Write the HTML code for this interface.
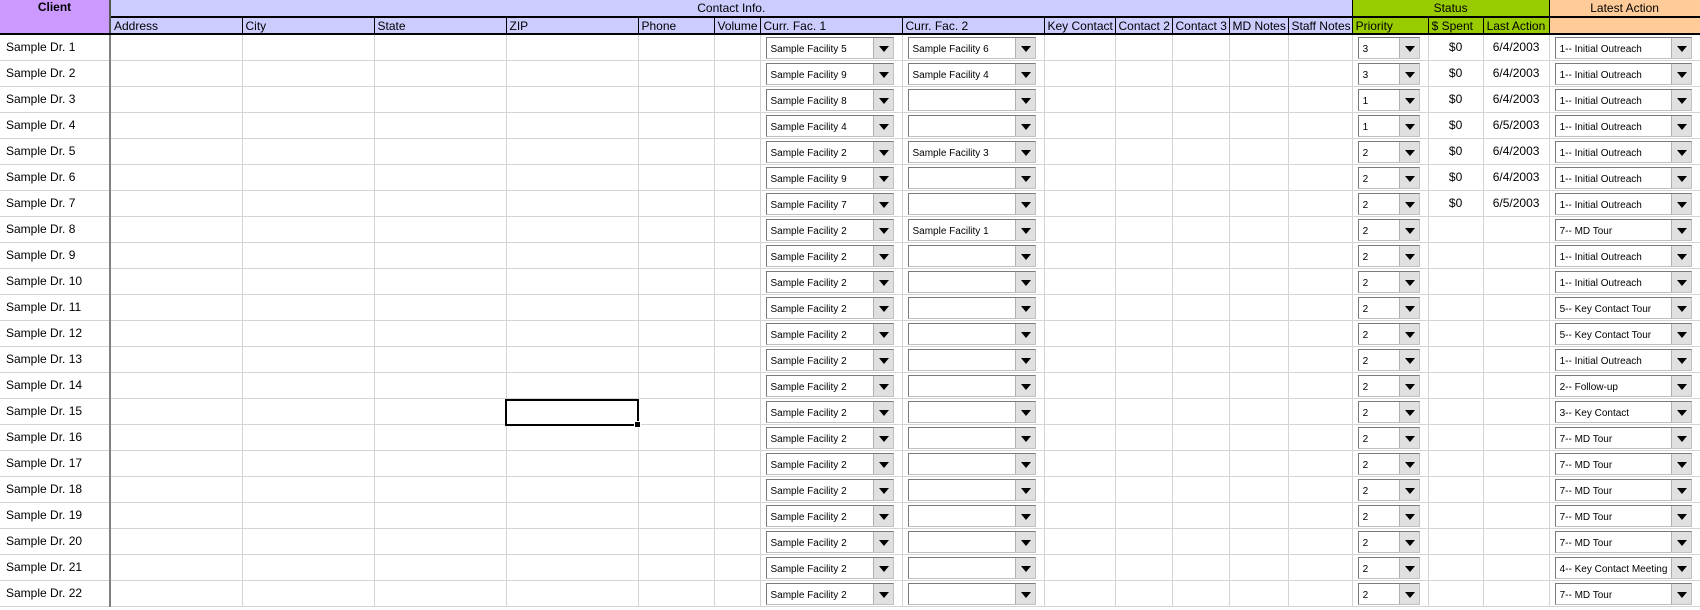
<!DOCTYPE html>
<html><head><meta charset="utf-8"><style>
*{margin:0;padding:0;box-sizing:border-box}
body{width:1700px;height:610px;overflow:hidden;background:#fff;font-family:"Liberation Sans",Arial,sans-serif;font-size:12px;color:#000;position:relative}
table{border-collapse:collapse;table-layout:fixed;position:absolute;left:0;top:0;width:1700px}
td{border-right:1px solid #d4d4d4;border-bottom:1px solid #d4d4d4;height:26px;padding:0;white-space:nowrap;overflow:hidden;position:relative;vertical-align:middle}
td.c{padding-left:6px;border-right:2px solid #808080}
tr.h1 td{height:17px;text-align:center;border-bottom:2px solid #000;border-right:1px solid #000}
tr.h2 td{height:17px;padding-left:3px;border-right:1px solid #000;border-bottom:2px solid #000}
.cl{background:#cc99ff;font-weight:bold;text-align:center;vertical-align:top !important;border-right:2px solid #555 !important;font-size:12px}
.ci{background:#ccccff}.st{background:#99cc00}.la{background:#ffcc99}
.dd{position:absolute;left:5px;right:8px;top:2px;height:22px;border:1px solid #7a7a7a;border-right-color:#c0c0c0;border-bottom-color:#c0c0c0;background:#fff;font-size:10px;padding:6px 0 0 4px}
.dd b{position:absolute;right:0;top:0;width:20px;height:20px;background:#e0e0e0;border-left:1px solid #b0b0b0}
.dd b:after{content:"";position:absolute;left:5px;top:8px;border-left:5px solid transparent;border-right:5px solid transparent;border-top:6px solid #000}
.r{text-align:center}
.sel{position:absolute;left:505px;top:399px;width:134px;height:27px;border:2px solid #000}
.sel:after{content:"";position:absolute;right:-4px;bottom:-4px;width:5px;height:5px;background:#000;border:1px solid #fff}
</style></head><body>
<table>
<colgroup><col style="width:110px"><col style="width:132px"><col style="width:132px"><col style="width:132px"><col style="width:132px"><col style="width:76px"><col style="width:46px"><col style="width:142px"><col style="width:142px"><col style="width:71px"><col style="width:57px"><col style="width:57px"><col style="width:59px"><col style="width:64px"><col style="width:76px"><col style="width:55px"><col style="width:66px"><col style="width:151px"></colgroup>
<tr class="h1"><td class="cl" rowspan="2">Client</td><td class="ci" colspan="13">Contact Info.</td><td class="st" colspan="3">Status</td><td class="la">Latest Action</td></tr>
<tr class="h2"><td class="ci">Address</td><td class="ci">City</td><td class="ci">State</td><td class="ci">ZIP</td><td class="ci">Phone</td><td class="ci">Volume</td><td class="ci">Curr. Fac. 1</td><td class="ci">Curr. Fac. 2</td><td class="ci">Key Contact</td><td class="ci">Contact 2</td><td class="ci">Contact 3</td><td class="ci">MD Notes</td><td class="ci">Staff Notes</td><td class="st">Priority</td><td class="st">$ Spent</td><td class="st">Last Action</td><td class="la"></td></tr>
<tr><td class="c">Sample Dr. 1</td><td></td><td></td><td></td><td></td><td></td><td></td><td><div class="dd">Sample Facility 5<b></b></div></td><td><div class="dd">Sample Facility 6<b></b></div></td><td></td><td></td><td></td><td></td><td></td><td><div class="dd">3<b></b></div></td><td class="r">$0</td><td class="r">6/4/2003</td><td><div class="dd">1-- Initial Outreach<b></b></div></td></tr>
<tr><td class="c">Sample Dr. 2</td><td></td><td></td><td></td><td></td><td></td><td></td><td><div class="dd">Sample Facility 9<b></b></div></td><td><div class="dd">Sample Facility 4<b></b></div></td><td></td><td></td><td></td><td></td><td></td><td><div class="dd">3<b></b></div></td><td class="r">$0</td><td class="r">6/4/2003</td><td><div class="dd">1-- Initial Outreach<b></b></div></td></tr>
<tr><td class="c">Sample Dr. 3</td><td></td><td></td><td></td><td></td><td></td><td></td><td><div class="dd">Sample Facility 8<b></b></div></td><td><div class="dd"><b></b></div></td><td></td><td></td><td></td><td></td><td></td><td><div class="dd">1<b></b></div></td><td class="r">$0</td><td class="r">6/4/2003</td><td><div class="dd">1-- Initial Outreach<b></b></div></td></tr>
<tr><td class="c">Sample Dr. 4</td><td></td><td></td><td></td><td></td><td></td><td></td><td><div class="dd">Sample Facility 4<b></b></div></td><td><div class="dd"><b></b></div></td><td></td><td></td><td></td><td></td><td></td><td><div class="dd">1<b></b></div></td><td class="r">$0</td><td class="r">6/5/2003</td><td><div class="dd">1-- Initial Outreach<b></b></div></td></tr>
<tr><td class="c">Sample Dr. 5</td><td></td><td></td><td></td><td></td><td></td><td></td><td><div class="dd">Sample Facility 2<b></b></div></td><td><div class="dd">Sample Facility 3<b></b></div></td><td></td><td></td><td></td><td></td><td></td><td><div class="dd">2<b></b></div></td><td class="r">$0</td><td class="r">6/4/2003</td><td><div class="dd">1-- Initial Outreach<b></b></div></td></tr>
<tr><td class="c">Sample Dr. 6</td><td></td><td></td><td></td><td></td><td></td><td></td><td><div class="dd">Sample Facility 9<b></b></div></td><td><div class="dd"><b></b></div></td><td></td><td></td><td></td><td></td><td></td><td><div class="dd">2<b></b></div></td><td class="r">$0</td><td class="r">6/4/2003</td><td><div class="dd">1-- Initial Outreach<b></b></div></td></tr>
<tr><td class="c">Sample Dr. 7</td><td></td><td></td><td></td><td></td><td></td><td></td><td><div class="dd">Sample Facility 7<b></b></div></td><td><div class="dd"><b></b></div></td><td></td><td></td><td></td><td></td><td></td><td><div class="dd">2<b></b></div></td><td class="r">$0</td><td class="r">6/5/2003</td><td><div class="dd">1-- Initial Outreach<b></b></div></td></tr>
<tr><td class="c">Sample Dr. 8</td><td></td><td></td><td></td><td></td><td></td><td></td><td><div class="dd">Sample Facility 2<b></b></div></td><td><div class="dd">Sample Facility 1<b></b></div></td><td></td><td></td><td></td><td></td><td></td><td><div class="dd">2<b></b></div></td><td></td><td></td><td><div class="dd">7-- MD Tour<b></b></div></td></tr>
<tr><td class="c">Sample Dr. 9</td><td></td><td></td><td></td><td></td><td></td><td></td><td><div class="dd">Sample Facility 2<b></b></div></td><td><div class="dd"><b></b></div></td><td></td><td></td><td></td><td></td><td></td><td><div class="dd">2<b></b></div></td><td></td><td></td><td><div class="dd">1-- Initial Outreach<b></b></div></td></tr>
<tr><td class="c">Sample Dr. 10</td><td></td><td></td><td></td><td></td><td></td><td></td><td><div class="dd">Sample Facility 2<b></b></div></td><td><div class="dd"><b></b></div></td><td></td><td></td><td></td><td></td><td></td><td><div class="dd">2<b></b></div></td><td></td><td></td><td><div class="dd">1-- Initial Outreach<b></b></div></td></tr>
<tr><td class="c">Sample Dr. 11</td><td></td><td></td><td></td><td></td><td></td><td></td><td><div class="dd">Sample Facility 2<b></b></div></td><td><div class="dd"><b></b></div></td><td></td><td></td><td></td><td></td><td></td><td><div class="dd">2<b></b></div></td><td></td><td></td><td><div class="dd">5-- Key Contact Tour<b></b></div></td></tr>
<tr><td class="c">Sample Dr. 12</td><td></td><td></td><td></td><td></td><td></td><td></td><td><div class="dd">Sample Facility 2<b></b></div></td><td><div class="dd"><b></b></div></td><td></td><td></td><td></td><td></td><td></td><td><div class="dd">2<b></b></div></td><td></td><td></td><td><div class="dd">5-- Key Contact Tour<b></b></div></td></tr>
<tr><td class="c">Sample Dr. 13</td><td></td><td></td><td></td><td></td><td></td><td></td><td><div class="dd">Sample Facility 2<b></b></div></td><td><div class="dd"><b></b></div></td><td></td><td></td><td></td><td></td><td></td><td><div class="dd">2<b></b></div></td><td></td><td></td><td><div class="dd">1-- Initial Outreach<b></b></div></td></tr>
<tr><td class="c">Sample Dr. 14</td><td></td><td></td><td></td><td></td><td></td><td></td><td><div class="dd">Sample Facility 2<b></b></div></td><td><div class="dd"><b></b></div></td><td></td><td></td><td></td><td></td><td></td><td><div class="dd">2<b></b></div></td><td></td><td></td><td><div class="dd">2-- Follow-up<b></b></div></td></tr>
<tr><td class="c">Sample Dr. 15</td><td></td><td></td><td></td><td></td><td></td><td></td><td><div class="dd">Sample Facility 2<b></b></div></td><td><div class="dd"><b></b></div></td><td></td><td></td><td></td><td></td><td></td><td><div class="dd">2<b></b></div></td><td></td><td></td><td><div class="dd">3-- Key Contact<b></b></div></td></tr>
<tr><td class="c">Sample Dr. 16</td><td></td><td></td><td></td><td></td><td></td><td></td><td><div class="dd">Sample Facility 2<b></b></div></td><td><div class="dd"><b></b></div></td><td></td><td></td><td></td><td></td><td></td><td><div class="dd">2<b></b></div></td><td></td><td></td><td><div class="dd">7-- MD Tour<b></b></div></td></tr>
<tr><td class="c">Sample Dr. 17</td><td></td><td></td><td></td><td></td><td></td><td></td><td><div class="dd">Sample Facility 2<b></b></div></td><td><div class="dd"><b></b></div></td><td></td><td></td><td></td><td></td><td></td><td><div class="dd">2<b></b></div></td><td></td><td></td><td><div class="dd">7-- MD Tour<b></b></div></td></tr>
<tr><td class="c">Sample Dr. 18</td><td></td><td></td><td></td><td></td><td></td><td></td><td><div class="dd">Sample Facility 2<b></b></div></td><td><div class="dd"><b></b></div></td><td></td><td></td><td></td><td></td><td></td><td><div class="dd">2<b></b></div></td><td></td><td></td><td><div class="dd">7-- MD Tour<b></b></div></td></tr>
<tr><td class="c">Sample Dr. 19</td><td></td><td></td><td></td><td></td><td></td><td></td><td><div class="dd">Sample Facility 2<b></b></div></td><td><div class="dd"><b></b></div></td><td></td><td></td><td></td><td></td><td></td><td><div class="dd">2<b></b></div></td><td></td><td></td><td><div class="dd">7-- MD Tour<b></b></div></td></tr>
<tr><td class="c">Sample Dr. 20</td><td></td><td></td><td></td><td></td><td></td><td></td><td><div class="dd">Sample Facility 2<b></b></div></td><td><div class="dd"><b></b></div></td><td></td><td></td><td></td><td></td><td></td><td><div class="dd">2<b></b></div></td><td></td><td></td><td><div class="dd">7-- MD Tour<b></b></div></td></tr>
<tr><td class="c">Sample Dr. 21</td><td></td><td></td><td></td><td></td><td></td><td></td><td><div class="dd">Sample Facility 2<b></b></div></td><td><div class="dd"><b></b></div></td><td></td><td></td><td></td><td></td><td></td><td><div class="dd">2<b></b></div></td><td></td><td></td><td><div class="dd">4-- Key Contact Meeting<b></b></div></td></tr>
<tr><td class="c">Sample Dr. 22</td><td></td><td></td><td></td><td></td><td></td><td></td><td><div class="dd">Sample Facility 2<b></b></div></td><td><div class="dd"><b></b></div></td><td></td><td></td><td></td><td></td><td></td><td><div class="dd">2<b></b></div></td><td></td><td></td><td><div class="dd">7-- MD Tour<b></b></div></td></tr>
</table>
<div class="sel"></div>
</body></html>
